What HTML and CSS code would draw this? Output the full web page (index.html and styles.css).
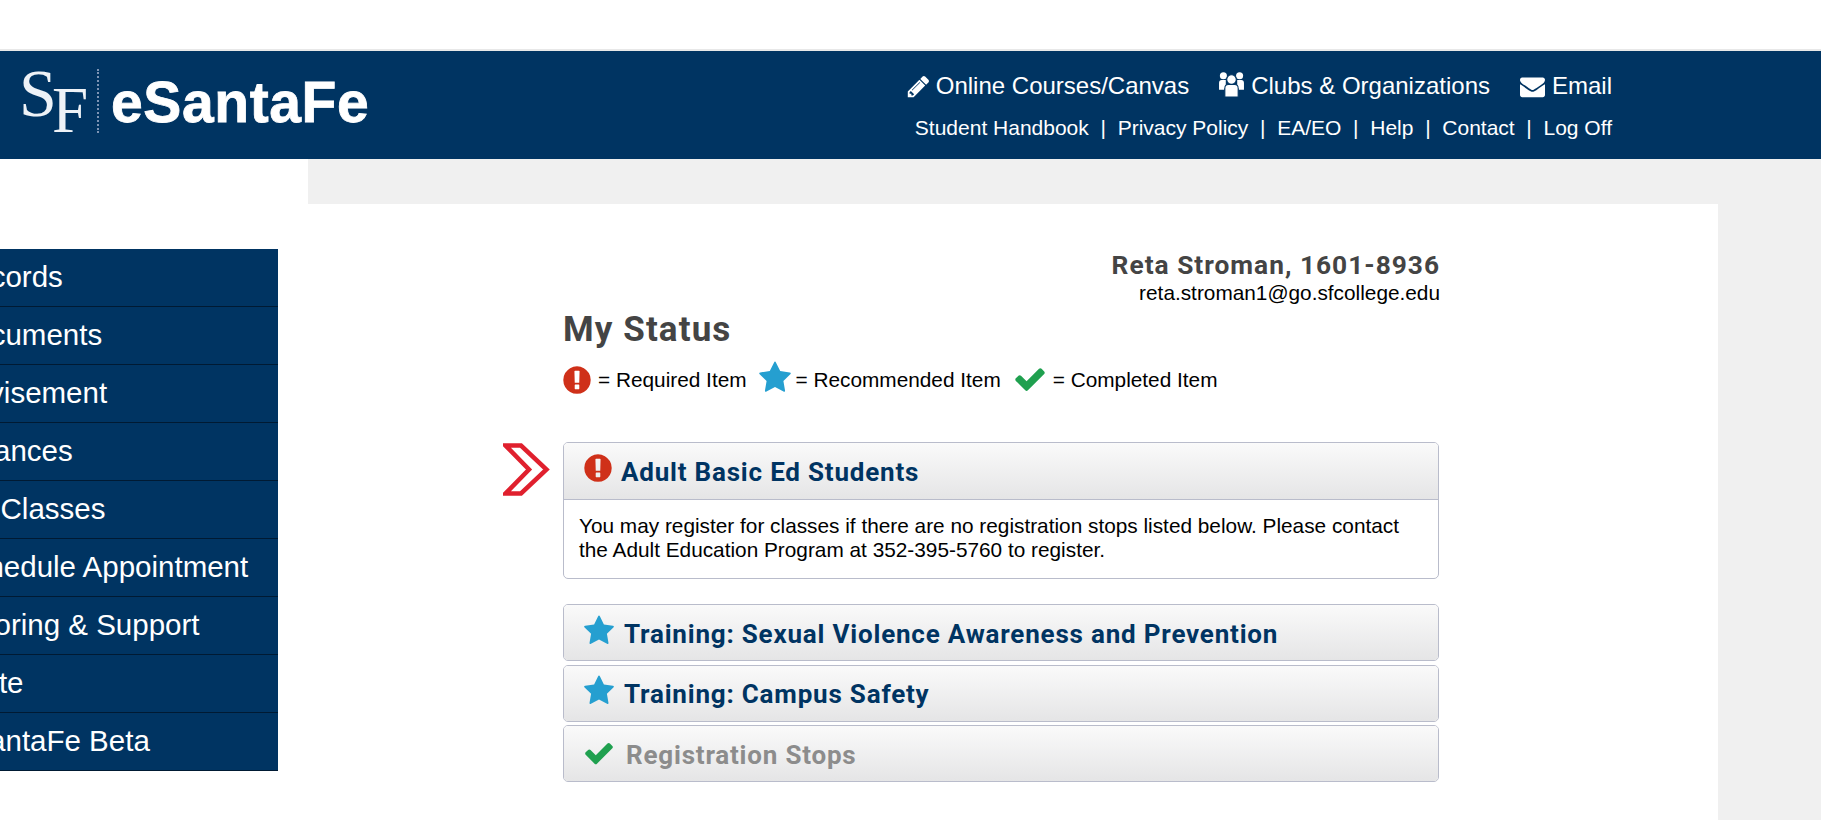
FILE: index.html
```html
<!DOCTYPE html>
<html lang="en">
<head>
<meta charset="utf-8">
<title>eSantaFe - My Status</title>
<link rel="stylesheet" href="styles.css">
</head>
<body>
<svg class="defs" aria-hidden="true">
  <symbol id="i-star" viewBox="0 0 1792 1792"><path d="M1728 647q0 22-26 48l-363 354 86 500q1 7 1 20 0 21-10.5 35.5t-30.5 14.5q-19 0-40-12l-449-236-449 236q-22 12-40 12-21 0-31.5-14.5t-10.5-35.5q0-6 2-20l86-500-364-354q-25-27-25-48 0-37 56-46l502-73 225-455q19-41 49-41t49 41l225 455 502 73q56 9 56 46z"/></symbol>
  <symbol id="i-check" viewBox="0 0 1792 1792"><path d="M1671 566q0 40-28 68l-724 724-136 136q-28 28-68 28t-68-28l-136-136-362-362q-28-28-28-68t28-68l136-136q28-28 68-28t68 28l294 295 656-657q28-28 68-28t68 28l136 136q28 28 28 68z"/></symbol>
  <symbol id="i-excl" viewBox="0 0 1792 1792"><path d="M896 128q209 0 385.5 103t279.5 279.5 103 385.5-103 385.5-279.5 279.5-385.5 103-385.5-103-279.5-279.5-103-385.5 103-385.5 279.5-279.5 385.5-103zm128 1247v-190q0-14-9-23.5t-22-9.5h-192q-13 0-23 10t-10 23v190q0 13 10 23t23 10h192q13 0 22-9.5t9-23.5zm-2-344l18-621q0-12-10-18-10-8-24-8h-220q-14 0-24 8-10 6-10 18l17 621q0 10 10 17.5t24 7.5h185q14 0 23.5-7.5t10.5-17.5z"/></symbol>
  <symbol id="i-pencil" viewBox="0 0 1792 1792"><path d="M491 1536l91-91-235-235-91 91v107h128v128h107zm523-928q0-22-22-22-10 0-17 7l-542 542q-7 7-7 17 0 22 22 22 10 0 17-7l542-542q7-7 7-17zm-54-192l416 416-832 832h-416v-416zm683 96q0 53-37 90l-166 166-416-416 166-165q36-38 90-38 53 0 91 38l235 234q37 39 37 91z"/></symbol>
  <symbol id="i-users" viewBox="0 0 26 24">
    <circle cx="5.2" cy="3.6" r="3.4"/><circle cx="20.8" cy="3.6" r="3.4"/>
    <path d="M1 17V10.5Q1 7.6 3.6 7.6H7.5V15.5H6V17zM25 17V10.5Q25 7.6 22.4 7.6H18.5V15.5H20V17z"/>
    <circle cx="13" cy="7.2" r="4.6" stroke="#003462"/>
    <path d="M6.6 24V15.5Q6.6 12 10 12H16Q19.4 12 19.4 15.5V24z" stroke="#003462"/>
  </symbol>
  <symbol id="i-mail" viewBox="0 0 1792 1792"><path d="M1792 710v794q0 66-47 113t-113 47h-1472q-66 0-113-47t-47-113v-794q44 49 101 87 362 246 497 345 57 42 92.5 65.5t94.5 48 110 24.5h2q51 0 110-24.5t94.5-48 92.5-65.5q170-123 498-345 57-39 100-87zm0-294q0 79-49 151t-122 123q-376 261-468 325-10 7-42.5 30.5t-54 38-52 32.5-57.5 27-50 9h-2q-23 0-50-9t-57.5-27-52-32.5-54-38-42.5-30.5q-91-64-262-182.5t-205-142.5q-62-42-117-115.5t-55-136.5q0-78 41.5-130t118.5-52h1472q65 0 112.5 47t47.5 113z"/></symbol>
</svg>

<div class="topgap"></div>
<header class="banner">
  <div class="logo">
    <div class="logo-mark"><span class="logo-s">S</span><span class="logo-f">F</span></div>
    <div class="logo-rule"></div>
    <div class="logo-name">eSantaFe</div>
  </div>
  <nav class="toplinks">
    <div class="links-main">
      <a class="lm"><svg class="ic ic-pencil"><use href="#i-pencil"/></svg>Online Courses/Canvas</a>
      <a class="lm"><svg class="ic ic-users"><use href="#i-users"/></svg>Clubs &amp; Organizations</a>
      <a class="lm"><svg class="ic ic-mail"><use href="#i-mail"/></svg>Email</a>
    </div>
    <div class="links-sub">
      <a>Student Handbook</a><span class="sep">|</span><a>Privacy Policy</a><span class="sep">|</span><a>EA/EO</a><span class="sep">|</span><a>Help</a><span class="sep">|</span><a>Contact</a><span class="sep">|</span><a>Log Off</a>
    </div>
  </nav>
</header>

<div class="layout">
  <aside class="sidebar">
    <ul class="menu">
      <li><a>Records</a></li>
      <li><a>Documents</a></li>
      <li><a>Advisement</a></li>
      <li><a>Finances</a></li>
      <li><a>My Classes</a></li>
      <li><a>Schedule Appointment</a></li>
      <li><a>Tutoring &amp; Support</a></li>
      <li><a>Invite</a></li>
      <li><a>eSantaFe Beta</a></li>
    </ul>
  </aside>
  <main class="stage">
    <section class="panel">
      <div class="column">
        <div class="identity">
          <div class="id-name">Reta Stroman, 1601-8936</div>
          <div class="id-mail">reta.stroman1@go.sfcollege.edu</div>
        </div>
        <h1 class="title">My Status</h1>
        <p class="legend">
          <svg class="lg lg-excl"><use href="#i-excl"/></svg><span class="lt">= Required Item</span>
          <svg class="lg lg-star"><use href="#i-star"/></svg><span class="lt">= Recommended Item</span>
          <svg class="lg lg-check"><use href="#i-check"/></svg><span class="lt">= Completed Item</span>
        </p>

        <div class="acc acc-open">
          <svg class="marker" viewBox="0 0 47 53"><path d="M2.500 2.500h15.500l25.500 24-25.500 24H2.500l23.500-24z" fill="#fff" stroke="#e0202e" stroke-width="4.500"/></svg>
          <div class="acc-head">
            <svg class="h-excl"><use href="#i-excl"/></svg>
            <span class="acc-title">Adult Basic Ed Students</span>
          </div>
          <div class="acc-body">You may register for classes if there are no registration stops listed below. Please contact the Adult Education Program at 352-395-5760 to register.</div>
        </div>

        <div class="acc-list">
          <div class="acc">
            <div class="acc-head">
              <svg class="h-star"><use href="#i-star"/></svg>
              <span class="acc-title">Training: Sexual Violence Awareness and Prevention</span>
            </div>
          </div>
          <div class="acc">
            <div class="acc-head">
              <svg class="h-star"><use href="#i-star"/></svg>
              <span class="acc-title">Training: Campus Safety</span>
            </div>
          </div>
          <div class="acc">
            <div class="acc-head">
              <svg class="h-check"><use href="#i-check"/></svg>
              <span class="acc-title acc-done">Registration Stops</span>
            </div>
          </div>
        </div>
      </div>
    </section>
  </main>
</div>
</body>
</html>
```
FILE: styles.css
```css
* { box-sizing: border-box; }
html, body { margin: 0; padding: 0; height: 820px; overflow: hidden; background: #fff; }
body { font-family: "Liberation Sans", Arial, sans-serif; color: #000; }
.defs { display: none; }
a { color: inherit; text-decoration: none; }

.topgap { height: 51px; border-bottom: 2px solid #e8e8e8; }

.banner {
  height: 108px;
  background: #003462;
  color: #fff;
  display: flex;
  justify-content: space-between;
  padding: 0 209px 0 19px;
}
.logo { display: flex; align-items: flex-start; }
.logo-mark { position: relative; width: 69px; height: 100px; font-family: "Liberation Serif", serif; color: #eef2f7; }
.logo-s { position: absolute; left: 0; top: 8px; font-size: 68px; line-height: 68px; }
.logo-f { position: absolute; left: 33px; top: 27px; font-size: 65px; line-height: 65px; }
.logo-rule { width: 0; height: 64px; margin: 18px 0 0 9px; border-left: 2px dotted #7d94b4; }
.logo-name {
  font-weight: 700;
  font-size: 57px;
  line-height: 60px;
  margin: 21px 0 0 12px;
  letter-spacing: 0.6px;
  -webkit-text-stroke: .8px #fff;
  filter: blur(.5px);
}

.toplinks { display: flex; flex-direction: column; align-items: flex-end; padding-top: 21px; }
.links-main { display: flex; gap: 30px; font-size: 24px; line-height: 28px; }
.lm { display: flex; align-items: center; }
.ic { fill: #fff; margin-right: 5px; }
.ic-pencil { width: 25px; height: 25px; }
.ic-users { width: 27px; height: 25px; margin: -3px 6px 0 -1px; }
.ic-mail { width: 25px; height: 25px; margin-right: 7px; }
.links-sub { display: flex; font-size: 21px; line-height: 24px; margin-top: 16px; }
.sep { margin: 0 11.700px; }

.layout { display: flex; height: 661px; }
.sidebar { flex: 0 0 308px; overflow: hidden; padding-top: 90px; }
.menu {
  list-style: none;
  margin: 0 0 0 -80px;
  padding: 0;
  width: 358px;
  background: #003462;
  color: #fff;
  font-size: 29.500px;
}
.menu li { height: 58px; border-bottom: 1px solid #001a33; line-height: 55px; padding-left: 33px; white-space: nowrap; }

.stage { flex: 1; background: #f0f0f0; padding-top: 45px; }
.panel { width: 1410px; height: 100%; background: #fff; padding: 46px 0 0 255px; }
.column { width: 877px; }

.identity { text-align: right; }
.id-name { font-family: Roboto, "Liberation Sans", sans-serif; font-weight: 700; font-size: 26.300px; line-height: 30px; color: #444; letter-spacing: 1px; }
.id-mail { font-size: 20.800px; line-height: 24px; margin-top: 1px; }

.title { font-family: Roboto, "Liberation Sans", sans-serif; margin: 3px 0 0; font-size: 35px; line-height: 44px; font-weight: 700; color: #444; letter-spacing: 1.100px; }

.legend { margin: 12px 0 0; height: 32px; display: flex; align-items: center; font-size: 20.800px; }
.lg { flex: none; }
.lg-excl { width: 32px; height: 32px; fill: #cf3019; margin: 0 5px 0 -2px; }
.lg-star { width: 34px; height: 34px; fill: #259fd0; margin: -4px 4px 0 11px; }
.lg-check { width: 34px; height: 34px; fill: #1fa04f; margin: -2px 6px 0 12px; }

.acc { position: relative; border: 1px solid #b9bccb; border-radius: 5px; background: #fff; margin-right: 1px; }
.acc-open { margin-top: 46px; }
.marker { position: absolute; left: -61px; top: 0; width: 47px; height: 53px; }
.acc-head {
  height: 55px;
  display: flex;
  align-items: center;
  padding: 2px 0 0 18px;
  border-radius: 4px;
  background: linear-gradient(#fafafa, #e5e5e6);
}
.acc-open .acc-head { border-bottom: 1px solid #b9bccb; height: 57px; border-radius: 4px 4px 0 0; }
.acc-title { font-family: Roboto, "Liberation Sans", sans-serif; font-size: 26px; font-weight: 700; color: #003462; letter-spacing: .8px; margin-left: 9px; }
.acc-done { color: #8c8c8c; }
.h-excl { width: 32px; height: 32px; fill: #cf3019; margin: -8px -2px 0 0; }
.h-star { width: 32px; height: 32px; fill: #259fd0; margin: -6px 0 0 1px; }
.h-check { width: 32px; height: 32px; fill: #1fa04f; margin: -4px 2px 0 1px; }
.acc-body { padding: 14px 15px 16px; font-size: 20.800px; line-height: 24px; }

.acc-list { margin-top: 25px; display: flex; flex-direction: column; gap: 3.500px; }
```
